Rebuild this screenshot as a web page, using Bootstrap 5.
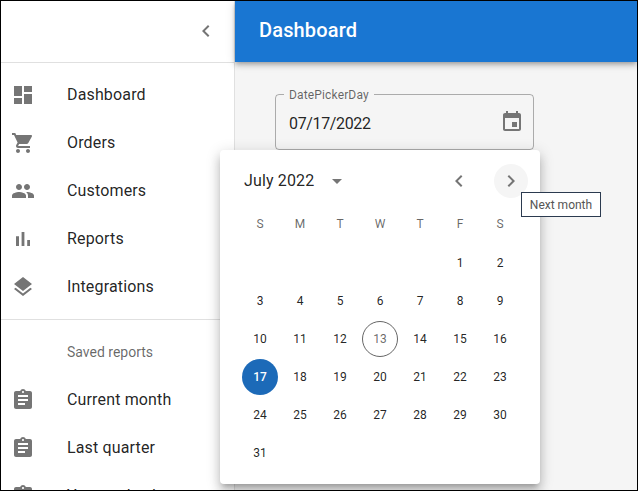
<!DOCTYPE html>
<html lang="en">
<head>
    <meta charset="UTF-8">
    <meta name="viewport" content="width=device-width, initial-scale=1.0">
    <title>Dashboard</title>
    <link href="https://cdn.jsdelivr.net/npm/bootstrap@5.3.0/dist/css/bootstrap.min.css" rel="stylesheet">
    <style>
        html, body { height: 100%; overflow: hidden; }
        body {
            font-family: Roboto, "Liberation Sans", sans-serif;
            background: #fff;
            color: rgba(0,0,0,.87);
        }
        .app-frame {
            position: relative;
            width: 638px;
            height: 491px;
            border: 1px solid #000;
            overflow: hidden;
        }
        .side-drawer { width: 234px; border-right: 1px solid #e0e0e0; background: #fff; }
        .drawer-head { height: 62px; padding-right: 16px; padding-bottom: 2px; border-bottom: 1px solid #e0e0e0; }
        .drawer-list { padding: 8px 0; }
        .drawer-item { height: 48px; padding-left: 10px; font-size: 16px; letter-spacing: .15px; }
        .drawer-item svg { width: 24px; height: 24px; fill: #757575; margin-right: 32px; flex: none; }
        .drawer-sub { height: 48px; padding-left: 66px; font-size: 14px; color: rgba(0,0,0,.6); }
        .drawer-line { height: 1px; background: #e0e0e0; }
        .main-area { background: #f5f5f5; }
        .top-bar {
            height: 61px;
            padding: 0 0 3px 24px;
            background: #1976d2;
            color: #fff;
            font-size: 20px;
            font-weight: 500;
            letter-spacing: .15px;
            box-shadow: 0 2px 4px -1px rgba(0,0,0,.2), 0 4px 5px rgba(0,0,0,.14), 0 1px 10px rgba(0,0,0,.12);
        }
        .date-field {
            position: relative;
            width: 259px;
            height: 56px;
            margin: 32px 0 0 40px;
            padding: 3px 9px 0 13px;
            border: 1px solid rgba(0,0,0,.3);
            border-radius: 4px;
            font-size: 16px;
        }
        .date-value { letter-spacing: -.35px; }
        .date-label {
            position: absolute;
            left: 8px;
            top: -8px;
            padding: 0 5px;
            background: #f5f5f5;
            font-size: 12px;
            line-height: 16px;
            letter-spacing: .15px;
            color: rgba(0,0,0,.6);
        }
        .date-field svg { width: 24px; height: 24px; margin-top: -3px; fill: #757575; }
        .date-popup {
            position: absolute;
            left: 219px;
            top: 149px;
            width: 320px;
            height: 334px;
            background: #fff;
            border-radius: 4px;
            box-shadow: 0 5px 5px -3px rgba(0,0,0,.2), 0 8px 10px 1px rgba(0,0,0,.14), 0 3px 14px 2px rgba(0,0,0,.12);
        }
        .popup-head { height: 30px; margin-top: 16px; padding: 0 12px 0 24px; font-size: 16px; letter-spacing: .15px; }
        .popup-head svg { fill: #757575; }
        .month-pick svg { margin-left: 11px; }
        .nav-pair { gap: 18px; }
        .nav-round { width: 34px; height: 34px; border-radius: 50%; }
        .nav-round.is-hover { background: #f5f5f5; }
        .nav-round svg { width: 24px; height: 24px; }
        .day-grid {
            display: grid;
            grid-template-columns: repeat(7, 36px);
            column-gap: 4px;
            padding: 7px 22px 0;
            font-size: 12px;
        }
        .week-name { height: 42px; color: rgba(0,0,0,.6); }
        .day-cell { height: 38px; color: rgba(0,0,0,.87); }
        .day-cell > span {
            display: flex;
            align-items: center;
            justify-content: center;
            width: 36px;
            height: 36px;
            border-radius: 50%;
        }
        .day-today > span { border: 1px solid rgba(0,0,0,.6); color: rgba(0,0,0,.6); }
        .day-picked > span { background: #1c6ab8; color: #fff; font-weight: 500; }
        .hint-box {
            position: absolute;
            left: 520px;
            top: 191px;
            width: 80px;
            height: 25px;
            background: #fff;
            border: 1px solid #2b3a4f;
            font-size: 12px;
            color: #555;
        }
    </style>
</head>
<body>
    <div class="app-frame d-flex">
        <!-- menu lateral -->
        <div class="side-drawer flex-shrink-0">
            <div class="drawer-head d-flex align-items-center justify-content-end">
                <svg width="24" height="24" viewBox="0 0 24 24" fill="#757575"><path d="M15.41 7.41 14 6l-6 6 6 6 1.41-1.41L10.83 12z"/></svg>
            </div>
            <div class="drawer-list">
                <div class="drawer-item d-flex align-items-center">
                    <svg viewBox="0 0 24 24"><path d="M3 13h8V3H3v10zm0 8h8v-6H3v6zm10 0h8V11h-8v10zm0-18v6h8V3h-8z"/></svg>Dashboard
                </div>
                <div class="drawer-item d-flex align-items-center">
                    <svg viewBox="0 0 24 24"><path d="M7 18c-1.1 0-1.99.9-1.99 2S5.9 22 7 22s2-.9 2-2-.9-2-2-2zM1 2v2h2l3.6 7.59-1.35 2.45c-.16.28-.25.61-.25.96 0 1.1.9 2 2 2h12v-2H7.42c-.14 0-.25-.11-.25-.25l.03-.12.9-1.63h7.45c.75 0 1.41-.41 1.75-1.03l3.58-6.49c.08-.14.12-.31.12-.48 0-.55-.45-1-1-1H5.21l-.94-2H1zm16 16c-1.1 0-1.99.9-1.99 2s.89 2 1.99 2 2-.9 2-2-.9-2-2-2z"/></svg>Orders
                </div>
                <div class="drawer-item d-flex align-items-center">
                    <svg viewBox="0 0 24 24"><path d="M16 11c1.66 0 2.99-1.34 2.99-3S17.66 5 16 5c-1.66 0-3 1.34-3 3s1.34 3 3 3zm-8 0c1.66 0 2.99-1.34 2.99-3S9.66 5 8 5C6.34 5 5 6.34 5 8s1.34 3 3 3zm0 2c-2.33 0-7 1.17-7 3.5V19h14v-2.5c0-2.33-4.67-3.5-7-3.5zm8 0c-.29 0-.62.02-.97.05 1.16.84 1.97 1.97 1.97 3.45V19h6v-2.5c0-2.33-4.67-3.5-7-3.5z"/></svg>Customers
                </div>
                <div class="drawer-item d-flex align-items-center">
                    <svg viewBox="0 0 24 24"><path d="M5 9.2h3V19H5zM10.6 5h2.8v14h-2.8zm5.6 8H19v6h-2.8z"/></svg>Reports
                </div>
                <div class="drawer-item d-flex align-items-center">
                    <svg viewBox="0 0 24 24"><path d="m11.99 18.54-7.37-5.73L3 14.07l9 7 9-7-1.63-1.27-7.38 5.74zM12 16l7.36-5.73L21 9l-9-7-9 7 1.63 1.27L12 16z"/></svg>Integrations
                </div>
            </div>
            <div class="drawer-line"></div>
            <div class="drawer-list">
                <div class="drawer-sub d-flex align-items-center">Saved reports</div>
                <div class="drawer-item d-flex align-items-center">
                    <svg viewBox="0 0 24 24"><path d="M19 3h-4.18C14.4 1.84 13.3 1 12 1c-1.3 0-2.4.84-2.82 2H5c-1.1 0-2 .9-2 2v14c0 1.1.9 2 2 2h14c1.1 0 2-.9 2-2V5c0-1.1-.9-2-2-2zm-7 0c.55 0 1 .45 1 1s-.45 1-1 1-1-.45-1-1 .45-1 1-1zm2 14H7v-2h7v2zm3-4H7v-2h10v2zm0-4H7V7h10v2z"/></svg>Current month
                </div>
                <div class="drawer-item d-flex align-items-center">
                    <svg viewBox="0 0 24 24"><path d="M19 3h-4.18C14.4 1.84 13.3 1 12 1c-1.3 0-2.4.84-2.82 2H5c-1.1 0-2 .9-2 2v14c0 1.1.9 2 2 2h14c1.1 0 2-.9 2-2V5c0-1.1-.9-2-2-2zm-7 0c.55 0 1 .45 1 1s-.45 1-1 1-1-.45-1-1 .45-1 1-1zm2 14H7v-2h7v2zm3-4H7v-2h10v2zm0-4H7V7h10v2z"/></svg>Last quarter
                </div>
                <div class="drawer-item d-flex align-items-center">
                    <svg viewBox="0 0 24 24"><path d="M19 3h-4.18C14.4 1.84 13.3 1 12 1c-1.3 0-2.4.84-2.82 2H5c-1.1 0-2 .9-2 2v14c0 1.1.9 2 2 2h14c1.1 0 2-.9 2-2V5c0-1.1-.9-2-2-2zm-7 0c.55 0 1 .45 1 1s-.45 1-1 1-1-.45-1-1 .45-1 1-1zm2 14H7v-2h7v2zm3-4H7v-2h10v2zm0-4H7V7h10v2z"/></svg>Year-end sale
                </div>
            </div>
        </div>

        <!-- conteudo -->
        <div class="main-area flex-grow-1">
            <div class="top-bar d-flex align-items-center">Dashboard</div>
            <div class="date-field d-flex align-items-center justify-content-between">
                <span class="date-label">DatePickerDay</span>
                <span class="date-value">07/17/2022</span>
                <svg viewBox="0 0 24 24"><path d="M17 12h-5v5h5v-5zM16 1v2H8V1H6v2H5c-1.11 0-1.99.9-1.99 2L3 19c0 1.1.89 2 2 2h14c1.1 0 2-.9 2-2V5c0-1.1-.9-2-2-2h-1V1h-2zm3 18H5V8h14v11z"/></svg>
            </div>
        </div>

        <!-- calendario -->
        <div class="date-popup">
            <div class="popup-head d-flex align-items-center justify-content-between">
                <div class="month-pick d-flex align-items-center">
                    <span>July 2022</span>
                    <svg width="24" height="24" viewBox="0 0 24 24"><path d="m7 10 5 5 5-5z"/></svg>
                </div>
                <div class="nav-pair d-flex align-items-center">
                    <span class="nav-round d-flex align-items-center justify-content-center"><svg viewBox="0 0 24 24"><path d="M15.41 7.41 14 6l-6 6 6 6 1.41-1.41L10.83 12z"/></svg></span>
                    <span class="nav-round is-hover d-flex align-items-center justify-content-center"><svg viewBox="0 0 24 24"><path d="M10 6 8.59 7.41 13.17 12l-4.58 4.59L10 18l6-6z"/></svg></span>
                </div>
            </div>
            <div class="day-grid text-center" id="dayGrid"></div>
        </div>

        <div class="hint-box d-flex align-items-center justify-content-center">Next month</div>
    </div>

    <script>
        // monta a grade do mes
        const dayGrid = document.getElementById("dayGrid");
        ["S", "M", "T", "W", "T", "F", "S"].forEach(name => {
            dayGrid.insertAdjacentHTML("beforeend", `<div class="week-name d-flex align-items-center justify-content-center">${name}</div>`);
        });
        for (let i = 0; i < 5; i++) {
            dayGrid.insertAdjacentHTML("beforeend", `<div class="day-cell"></div>`);
        }
        for (let day = 1; day <= 31; day++) {
            let extra = "";
            if (day === 13) extra = " day-today";
            if (day === 17) extra = " day-picked";
            dayGrid.insertAdjacentHTML("beforeend", `<div class="day-cell${extra}"><span>${day}</span></div>`);
        }
    </script>
    <script src="https://cdn.jsdelivr.net/npm/bootstrap@5.3.0/dist/js/bootstrap.bundle.min.js"></script>
</body>
</html>
